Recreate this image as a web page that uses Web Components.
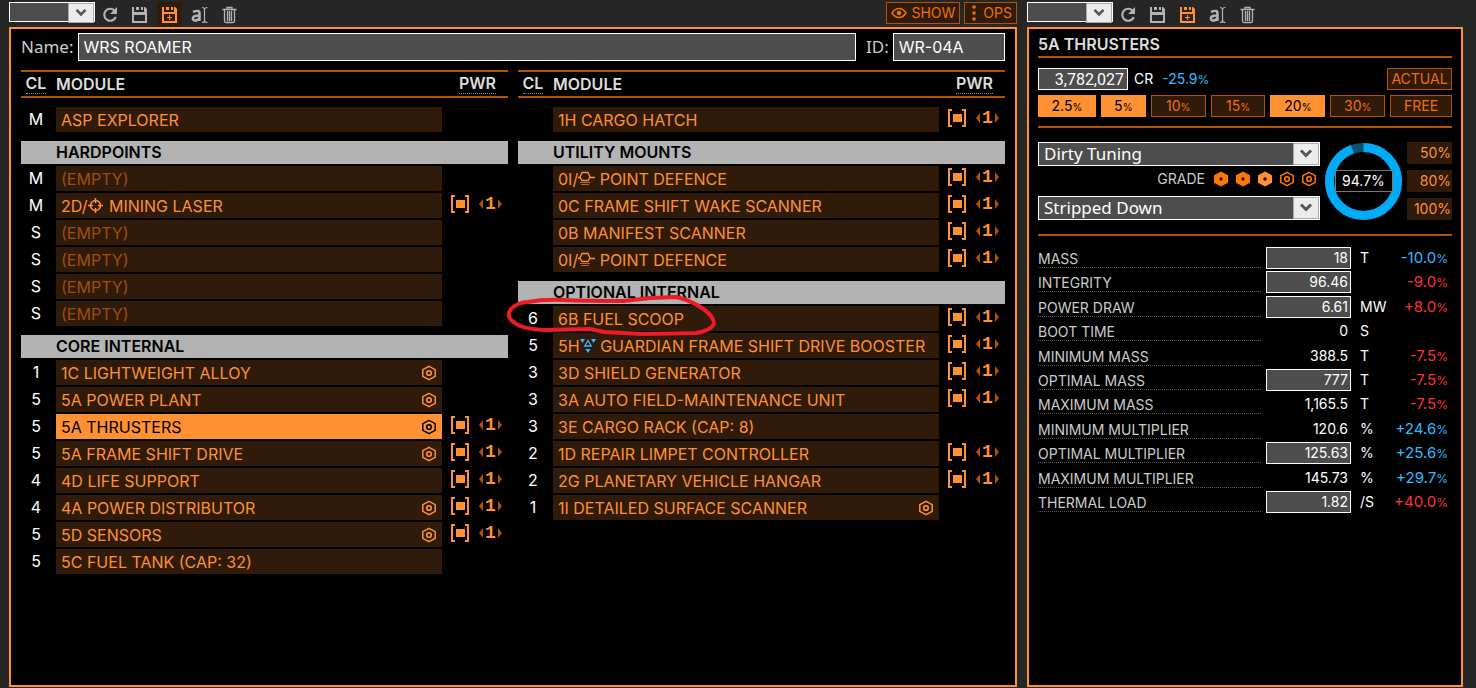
<!DOCTYPE html>
<html lang="en">
<head>
<meta charset="utf-8">
<title>Ship Outfitting</title>
<style>
  html { height: 100%; background: #262626; }
  body {
    margin: 0; min-height: 100%; display: flex;
    font: 16px/24px Inter, "Liberation Sans", sans-serif;
    background: #262626; color: #fff;
    --hot: #ff9133; --mid: #b35300; --text-mid: #f07000; --dim: #a04e08;
    --cell: #301b0b; --field: #4d4d4d; --blue: #33bbff; --red: #ff3333;
  }
  outfit-app { flex: 1; }
</style>
</head>
<body>
<outfit-app></outfit-app>
<script>
const define = (name, html) => customElements.define(name, class extends HTMLElement {
  constructor() {
    super();
    this.attachShadow({ mode: "open" }).innerHTML = "<style>*{box-sizing:border-box}</style>" + html(this);
  }
});

const ICONS = {
  reload: '<path d="M13.500 4.500A6 6 0 1 0 14.800 11" fill="none" stroke="currentColor" stroke-width="2.200"/><path d="M16 1v7H9z"/>',
  save: '<path d="M1 1h2v5h10V1h1l2 2v14H1zM3 9v6h11V9z" fill-rule="evenodd"/><path d="M5 1h3v3H5zM10 1h2v3h-2z"/>',
  saveAs: '<path d="M1 1h2v5h10V1h1l2 2v14H1zM3 8v7h11V8z" fill-rule="evenodd"/><path d="M5 1h3v3H5zM10 1h2v3h-2zM8 9h1v2h2v1H9v2H8v-2H6v-1h2z"/>',
  rename: '<path d="M2 6Q9 3 8.500 8v7M8.500 9.500C0 9 1 14.500 4 14.500Q7 14.500 8.500 12" fill="none" stroke="currentColor" stroke-width="2.500"/><path d="M11 1.500q2.500 0 2.500 2v11q0 2-2.500 2M16.500 1.500q-3 0-3 2m0 11q0 2 3 2" fill="none" stroke="currentColor" stroke-width="1.200"/>',
  trash: '<path d="M1.500 3.500h14M6 3V1.500h5V3M3.500 4v11q0 1.500 1.500 1.500h7q1.500 0 1.500-1.500V4M6.500 5v10M8.500 5v10M10.500 5v10" fill="none" stroke="currentColor" stroke-width="1.300"/>',
};

define("svg-icon", el => `
  <style>:host{display:block;width:17px;height:18px}svg{display:block;fill:currentColor}</style>
  <svg width="17" height="18" viewBox="0 0 17 18" aria-hidden="true">${ICONS[el.getAttribute("name")]}</svg>`);

define("hex-icon", el => `
  <style>:host{display:block;width:16px;height:16px;color:inherit}svg{display:block}</style>
  <svg width="16" height="16" viewBox="0 0 16 16" aria-hidden="true">
  ${el.hasAttribute("filled")
    ? '<path d="M8 .5l7 3.800v7.400L8 15.500l-7-3.800V4.300z" fill="currentColor"/><circle cx="8" cy="8" r="1.700" fill="#1a0d00"/>'
    : '<path d="M8 1.300l6.200 3.400v6.600L8 14.700l-6.200-3.400V4.700z" fill="none" stroke="currentColor" stroke-width="1.500"/><circle cx="8" cy="8" r="2.300" fill="none" stroke="currentColor" stroke-width="1.600"/>'}
  </svg>`);

define("pick-list", el => `
  <style>
    :host{display:block;border:1px solid #fff;height:24px}
    .box{display:grid;height:100%;background:var(--field)}
    select{grid-area:1/1;appearance:none;width:100%;border:0;background:none;color:#fff;padding:0 28px 0 5px;font:17px/20px "Noto Sans",sans-serif;border-radius:0}
    svg{grid-area:1/1;justify-self:end;height:100%;width:26px;background:#ececec;border:1px solid #aaa;pointer-events:none}
    :host([small]) {height:20px}
  </style>
  <div class="box"><select aria-label="${el.getAttribute("label")}"><option>${el.getAttribute("value") || ""}</option></select>
  <svg viewBox="0 0 24 20" aria-hidden="true"><path d="M7 6.500l5 5 5-5" fill="none" stroke="#555" stroke-width="3"/></svg></div>`);

define("cmd-button", () => `
  <style>
    :host{display:block}
    button{display:flex;align-items:center;justify-content:center;gap:4px;width:100%;height:22px;padding:0 4px;border:1px solid var(--mid);background:var(--cell);color:var(--text-mid);font:inherit;font-size:14px;line-height:20px;border-radius:0}
    :host([on]) button{background:var(--hot);border-color:var(--hot);color:#000}
    :host([flat]) button{border-color:var(--cell);color:var(--hot);justify-content:end;padding:0}
    ::slotted(small){font-size:10px;margin-left:-4px;padding-top:2px}
  </style><button type="button"><slot></slot></button>`);

define("tool-bar", el => `
  <style>
    :host{display:flex;align-items:start;height:27px;padding-top:2px}
    pick-list{width:86px;margin-right:2px}
    button{border:0;padding:3px 4px;height:25px;width:25px;margin-right:5px;background:none;color:#b3b3b3}
    button.on{color:var(--hot)}
    button.lit{background:var(--cell)}
    .end{display:flex;gap:4px;margin-left:auto}
    slot{display:contents}
  </style>
  <pick-list small label="Stored ${el.getAttribute("kind")}"></pick-list>
  ${["reload", "save", "saveAs", "rename", "trash"].map(n =>
    `<button type="button" aria-label="${n}" class="${n === "saveAs" ? "on" + (el.hasAttribute("lit") ? " lit" : "") : ""}"><svg-icon name="${n}"></svg-icon></button>`).join("")}
  <div class="end"><slot></slot></div>`);

define("power-cell", () => `
  <style>
    :host{display:flex;gap:10px;align-items:center;padding-left:9px;height:22px;color:var(--hot)}
    button{border:0;background:none;padding:0;color:var(--mid);display:block}
    svg{display:block}
    .prio{display:flex;align-items:center;gap:2px}
    span{font:bold 18px/22px "Liberation Mono",monospace;width:11px;text-align:center}
  </style>
  <button type="button" aria-label="Toggle power"><svg width="18" height="18" viewBox="0 0 18 18"><path d="M4 1H1v16h3M14 1h3v16h-3" fill="none" stroke="#ff9133" stroke-width="2"/><path d="M5 5h9v8H5z" fill="#ff9133"/></svg></button>
  <div class="prio"><button type="button" aria-label="Lower priority"><svg width="4" height="10" viewBox="0 0 4 10"><path d="M4 0v10L0 5z" fill="currentColor"/></svg></button><span>1</span><button type="button" aria-label="Raise priority"><svg width="4" height="10" viewBox="0 0 4 10"><path d="M0 0v10l4-5z" fill="currentColor"/></svg></button></div>`);

define("module-row", el => {
  const a = n => el.hasAttribute(n);
  return `
  <style>
    :host{display:grid;grid-template-columns:35px minmax(0,1fr) 66px;height:27px;align-items:start}
    .cl{width:30px;text-align:center}
    .name{display:flex;align-items:center;height:25px;padding:0 5px;border:0;background:var(--cell);color:var(--hot);font:inherit;text-align:left;white-space:nowrap;border-radius:0}
    :host([empty]) .name{color:var(--dim)}
    :host([selected]) .name{background:var(--hot);color:#000}
    ::slotted(svg){flex:none}
    .label{display:flex;align-items:center;white-space:pre}
    hex-icon{margin-left:auto}
  </style>
  <span class="cl">${el.getAttribute("cl") || ""}</span>
  <button type="button" class="name"><span class="label"><slot></slot></span>${a("mod") ? "<hex-icon></hex-icon>" : ""}</button>
  ${a("pwr") ? "<power-cell></power-cell>" : ""}`;
});

define("group-head", () => `
  <style>:host{display:block}h2{margin:0 0 2px;padding-left:35px;font:600 16px/23px Inter,sans-serif;height:23px;background:#b3b3b3;color:#000}</style>
  <h2><slot></slot></h2>`);

define("module-group", () => `<style>:host{display:block;margin-top:7px}</style><slot name="head"></slot><slot></slot>`);

define("module-column", () => `
  <style>
    :host{display:block;min-width:0}
    header{display:grid;grid-template-columns:35px 1fr 66px;height:28px;border:solid var(--mid);border-width:2px 0;line-height:24px;font-weight:600;color:#ddd;margin-bottom:9px}
    abbr{text-decoration:none;border-bottom:1px dotted #888;justify-self:center;line-height:19px;height:20px;margin-top:2px}
    abbr.cl{margin-right:5px}
    abbr.pw{margin-left:5px}
  </style>
  <header><abbr class="cl" title="Class">CL</abbr><span>MODULE</span><abbr class="pw" title="Power">PWR</abbr></header>
  <slot></slot>`);

define("text-field", el => `
  <style>
    :host{display:flex;align-items:center;gap:4px}
    label{font:17px/28px "Noto Sans",sans-serif;color:#ccc;white-space:nowrap}
    input{flex:1;min-width:0;height:28px;border:1px solid #fff;background:var(--field);color:#fff;font:inherit;padding:0 5px;border-radius:0}
  </style><label for="f">${el.getAttribute("label")}</label><input id="f" value="${el.getAttribute("value")}">`);

define("stat-table", () => {
  const rows = [
    ["MASS", "18", "T", "-10.0", "good", 1], ["INTEGRITY", "96.46", "", "-9.0", "bad", 1],
    ["POWER DRAW", "6.61", "MW", "+8.0", "bad", 1], ["BOOT TIME", "0", "S", "", "", 0],
    ["MINIMUM MASS", "388.5", "T", "-7.5", "bad", 0], ["OPTIMAL MASS", "777", "T", "-7.5", "bad", 1],
    ["MAXIMUM MASS", "1,165.5", "T", "-7.5", "bad", 0], ["MINIMUM MULTIPLIER", "120.6", "%", "+24.6", "good", 0],
    ["OPTIMAL MULTIPLIER", "125.63", "%", "+25.6", "good", 1], ["MAXIMUM MULTIPLIER", "145.73", "%", "+29.7", "good", 0],
    ["THERMAL LOAD", "1.82", "/S", "+40.0", "bad", 1]];
  return `
  <style>
    :host{display:block;font-size:14px}
    table{width:100%;border-collapse:collapse;table-layout:fixed}
    td,th{padding:0;height:24px;line-height:22px;font-weight:400;vertical-align:top}
    tr:nth-child(5n + 2) > *, tr:nth-child(5n + 4) > *{height:25px}
    th{text-align:left;color:#ccc}
    label{display:block;height:21px;line-height:24px;margin-right:5px;border-bottom:1px dotted #555}
    .v{text-align:right}
    input{display:block;width:100%;height:22px;border:1px solid #fff;border-radius:0;background:var(--field);color:#fff;font:inherit;text-align:right;padding:0 2px}
    output{display:block;padding-right:3px}
    .u{padding-left:9px}
    .d{text-align:right;padding-right:4px;font-size:15px}
    .good{color:var(--blue)} .bad{color:var(--red)}
    small{font-size:12px}
  </style>
  <table><colgroup><col><col style="width:85px"><col style="width:42px"><col style="width:59px"></colgroup><tbody>
  ${rows.map(([n, v, u, d, c, e], i) => `<tr><th scope="row"><label for="s${i}">${n}</label></th>
    <td class="v">${e ? `<input id="s${i}" value="${v}">` : `<output id="s${i}">${v}</output>`}</td>
    <td class="u">${u}</td><td class="d ${c}">${d ? `${d}<small>%</small>` : ""}</td></tr>`).join("")}
  </tbody></table>`;
});

define("roll-dial", () => `
  <style>
    :host{display:grid;width:77px;height:78px;place-items:center}
    svg,input{grid-area:1/1}
    input{width:58px;height:22px;border:1px solid #777;border-radius:0;background:#000;color:#fff;font:inherit;font-size:14px;text-align:center;padding:0}
  </style>
  <svg width="77" height="77" viewBox="0 0 77 77" aria-hidden="true"><circle cx="38.500" cy="38.500" r="34" fill="none" stroke="#055474" stroke-width="9"/>
  <circle cx="38.500" cy="38.500" r="34" fill="none" stroke="#00abf7" stroke-width="9" pathLength="100" stroke-dasharray="94.700 5.300" transform="rotate(-90 38.500 38.500)"/></svg>
  <input aria-label="Roll quality" value="94.7%">`);

define("detail-panel", () => `
  <style>
    :host{display:block;border:2px solid var(--hot);background:#000;padding:0 9px}
    h1{margin:0 0 10px;height:29px;border-bottom:2px solid var(--mid);font:600 16px/30px Inter,sans-serif;color:#ddd}
    .cost{display:flex;align-items:center;gap:6px;height:22px;font-size:14px}
    .cost input{width:90px;height:22px;border:1px solid #fff;border-radius:0;background:var(--field);color:#fff;font:16px/20px Roboto,sans-serif;text-align:right;padding:0 3px}
    .cost cmd-button{margin-left:auto;width:65px}
    .blue{color:var(--blue);margin-left:3px}
    .blue small{font-size:12px} small{font-size:10px}
    .rates{display:grid;grid-template-columns:58fr 45fr 55fr 55fr 55fr 55fr 62fr;gap:5px;margin-top:5px;padding-bottom:9px;border-bottom:2px solid var(--mid)}
    .mods{display:grid;grid-template-columns:minmax(0,1fr) 77px 45px;gap:5px;padding:14px 0;border-bottom:2px solid var(--mid);margin-bottom:11px}
    .grade{display:flex;align-items:center;justify-content:end;gap:6px;height:30px;padding:0 3px 4px 0;font-size:14px;color:#ccc}
    .grade span{margin-right:2px}
    .grade hex-icon{color:#ff7700} .grade hex-icon.now{color:var(--hot)}
    .quick{display:flex;flex-direction:column;justify-content:space-between}
  </style>
  <h1>5A THRUSTERS</h1>
  <div class="cost"><input aria-label="Cost" value="3,782,027"><span>CR</span><span class="blue">-25.9<small>%</small></span><cmd-button>ACTUAL</cmd-button></div>
  <div class="rates"><cmd-button on>2.5<small>%</small></cmd-button><cmd-button on>5<small>%</small></cmd-button><cmd-button>10<small>%</small></cmd-button><cmd-button>15<small>%</small></cmd-button><cmd-button on>20<small>%</small></cmd-button><cmd-button>30<small>%</small></cmd-button><cmd-button>FREE</cmd-button></div>
  <div class="mods">
    <div><pick-list label="Blueprint" value="Dirty Tuning"></pick-list>
      <div class="grade"><span>GRADE</span><hex-icon filled></hex-icon><hex-icon filled></hex-icon><hex-icon filled class="now"></hex-icon><hex-icon></hex-icon><hex-icon></hex-icon></div>
      <pick-list label="Experimental effect" value="Stripped Down"></pick-list></div>
    <roll-dial></roll-dial>
    <div class="quick"><cmd-button flat>50%</cmd-button><cmd-button flat>80%</cmd-button><cmd-button flat>100%</cmd-button></div>
  </div>
  <stat-table></stat-table>`);

const TURRET = '<svg width="17" height="17" viewBox="0 0 17 17" aria-label="turret"><path d="M4 2.500h6L12 7l-2 3.500H4L2 7z" fill="none" stroke="#ff9133" stroke-width="1.300"/><path d="M12 7.500h5M0 7.500h2" stroke="#ff9133" stroke-width="1.500"/><path d="M2 12.500h10M3 14.500h8" stroke="#b86420"/></svg>';
const GIMBAL = '<svg width="17" height="17" viewBox="0 0 17 17" aria-label="fixed"><circle cx="8.500" cy="8.500" r="5" fill="none" stroke="#ff9133" stroke-width="1.500"/><path d="M8.500 1v5M8.500 11v5M1 8.500h5M11 8.500h5" stroke="#ff9133" stroke-width="1.500"/></svg>';
const GUARD = '<svg width="16" height="16" viewBox="0 0 16 16" aria-label="guardian"><path d="M0 1h5L2.500 5zM11 1h5l-2.500 4zM5.500 11h5L8 15z" fill="#33bbff"/><path d="M8 2.500l3.200 5.500H4.800z" fill="none" stroke="#33bbff" stroke-width="1.300"/></svg>';
const row = (cl, name, flags = "") => `<module-row cl="${cl}" ${flags}>${name}</module-row>`;
const group = (head, ...rows) => `<module-group><group-head slot="head">${head}</group-head>${rows.join("")}</module-group>`;

define("ship-panel", () => `
  <style>
    :host{display:block;border:2px solid var(--hot);background:#000;padding:4px 10px 0}
    .names{display:grid;grid-template-columns:minmax(0,1fr) 139px;gap:10px;margin-bottom:9px}
    .cols{display:grid;grid-template-columns:1fr 1fr;gap:10px}
    .wrap{position:relative}
    .mark{position:absolute;left:485px;top:223px;pointer-events:none}
  </style>
  <div class="names"><text-field label="Name:" value="WRS ROAMER"></text-field><text-field label="ID:" value="WR-04A"></text-field></div>
  <div class="wrap"><div class="cols">
  <module-column>
    ${row("M", "ASP EXPLORER")}
    ${group("HARDPOINTS", row("M", "(EMPTY)", "empty"), row("M", `2D/${GIMBAL} MINING LASER`, "pwr"), row("S", "(EMPTY)", "empty"), row("S", "(EMPTY)", "empty"), row("S", "(EMPTY)", "empty"), row("S", "(EMPTY)", "empty"))}
    ${group("CORE INTERNAL", row("1", "1C LIGHTWEIGHT ALLOY", "mod"), row("5", "5A POWER PLANT", "mod"), row("5", "5A THRUSTERS", "mod pwr selected"), row("5", "5A FRAME SHIFT DRIVE", "mod pwr"), row("4", "4D LIFE SUPPORT", "pwr"), row("4", "4A POWER DISTRIBUTOR", "mod pwr"), row("5", "5D SENSORS", "mod pwr"), row("5", "5C FUEL TANK (CAP: 32)"))}
  </module-column>
  <module-column>
    ${row("", "1H CARGO HATCH", "pwr")}
    ${group("UTILITY MOUNTS", row("", `0I/${TURRET} POINT DEFENCE`, "pwr"), row("", "0C FRAME SHIFT WAKE SCANNER", "pwr"), row("", "0B MANIFEST SCANNER", "pwr"), row("", `0I/${TURRET} POINT DEFENCE`, "pwr"))}
    ${group("OPTIONAL INTERNAL", row("6", "6B FUEL SCOOP", "pwr"), row("5", `5H${GUARD} GUARDIAN FRAME SHIFT DRIVE BOOSTER`, "pwr"), row("3", "3D SHIELD GENERATOR", "pwr"), row("3", "3A AUTO FIELD-MAINTENANCE UNIT", "pwr"), row("3", "3E CARGO RACK (CAP: 8)"), row("2", "1D REPAIR LIMPET CONTROLLER", "pwr"), row("2", "2G PLANETARY VEHICLE HANGAR", "pwr"), row("1", "1I DETAILED SURFACE SCANNER", "mod"))}
  </module-column></div>
  <svg class="mark" width="216" height="46" viewBox="0 0 216 46" aria-hidden="true"><path d="M22 9Q38 6 58 7T118 8L144 5 170 4Q184 7 196 15T208 31Q204 38 190 40L136 41 98 39 84 36 40 37Q16 36 9 30-1 24 5 16 12 9 22 9Z" fill="none" stroke="#ed1c24" stroke-width="4"/></svg></div>`);

define("outfit-app", () => `
  <style>
    :host{display:grid;grid-template-columns:minmax(0,1fr) 436px;gap:0 10px;padding:0 13px 1px 9px;grid-template-rows:27px 1fr}
  </style>
  <tool-bar lit kind="builds">
    <cmd-button><svg width="16" height="12" viewBox="0 0 16 12" aria-hidden="true"><path d="M1 6Q4 1.500 8 1.500T15 6Q12 10.500 8 10.500T1 6Z" fill="none" stroke="#f07000" stroke-width="1.500"/><circle cx="8" cy="6" r="2.300" fill="#f07000"/></svg>SHOW</cmd-button>
    <cmd-button><svg width="10" height="16" viewBox="0 0 10 16" aria-hidden="true"><circle cx="5" cy="2" r="1.800" fill="#f07000"/><circle cx="5" cy="8" r="1.800" fill="#f07000"/><circle cx="5" cy="14" r="1.800" fill="#f07000"/></svg>OPS</cmd-button>
  </tool-bar>
  <tool-bar kind="modules"></tool-bar>
  <ship-panel></ship-panel>
  <detail-panel></detail-panel>`);
</script>
</body>
</html>
